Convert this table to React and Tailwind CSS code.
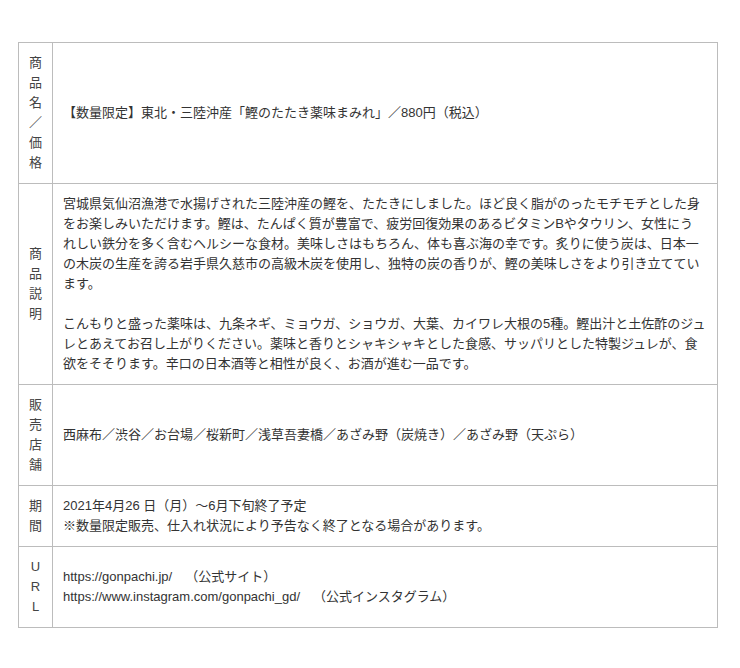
import React from "react";

const font = { fontFamily: '"Liberation Sans", "Noto Sans CJK JP", sans-serif' };

function Label({ text }) {
  return (
    <td className="w-[34px] border border-[#bcbcbc] py-[10px] text-center align-middle text-[#444]">
      <div className="flex flex-col items-center">
        {Array.from(text).map((c, i) => (
          <span key={i} className="block leading-[20px]">{c}</span>
        ))}
      </div>
    </td>
  );
}

function Cell({ children }) {
  return (
    <td className="border border-[#bcbcbc] py-[10px] pl-[10px] pr-[11px] align-middle leading-[20px]">
      {children}
    </td>
  );
}

export default function App() {
  return (
    <div className="min-h-[668px] w-[740px] bg-white pl-[18px] pt-[42px] text-[13px] text-[#333] [text-autospace:no-autospace] [text-spacing-trim:space-all]" style={font}>
      <table className="w-[700px] table-fixed border-collapse">
        <colgroup>
          <col className="w-[34px]" />
          <col />
        </colgroup>
        <tbody>
          <tr>
            <Label text="商品名／価格" />
            <Cell>【数量限定】東北・三陸沖産「鰹のたたき薬味まみれ」／880円（税込）</Cell>
          </tr>
          <tr>
            <Label text="商品説明" />
            <Cell>
              <p>宮城県気仙沼漁港で水揚げされた三陸沖産の鰹を、たたきにしました。ほど良く脂がのったモチモチとした身をお楽しみいただけます。鰹は、たんぱく質が豊富で、疲労回復効果のあるビタミンBやタウリン、女性にうれしい鉄分を多く含むヘルシーな食材。美味しさはもちろん、体も喜ぶ海の幸です。炙りに使う炭は、日本一の木炭の生産を誇る岩手県久慈市の高級木炭を使用し、独特の炭の香りが、鰹の美味しさをより引き立てています。</p>
              <p className="h-[20px]"></p>
              <p>こんもりと盛った薬味は、九条ネギ、ミョウガ、ショウガ、大葉、カイワレ大根の5種。鰹出汁と土佐酢のジュレとあえてお召し上がりください。薬味と香りとシャキシャキとした食感、サッパリとした特製ジュレが、食欲をそそります。辛口の日本酒等と相性が良く、お酒が進む一品です。</p>
            </Cell>
          </tr>
          <tr>
            <Label text="販売店舗" />
            <Cell>西麻布／渋谷／お台場／桜新町／浅草吾妻橋／あざみ野（炭焼き）／あざみ野（天ぷら）</Cell>
          </tr>
          <tr>
            <Label text="期間" />
            <Cell>
              <p>2021年4月26 日（月）～6月下旬終了予定</p>
              <p>※数量限定販売、仕入れ状況により予告なく終了となる場合があります。</p>
            </Cell>
          </tr>
          <tr>
            <Label text="URL" />
            <Cell>
              <p>https://gonpachi.jp/　（公式サイト）</p>
              <p>https://www.instagram.com/gonpachi_gd/　（公式インスタグラム）</p>
            </Cell>
          </tr>
        </tbody>
      </table>
    </div>
  );
}
